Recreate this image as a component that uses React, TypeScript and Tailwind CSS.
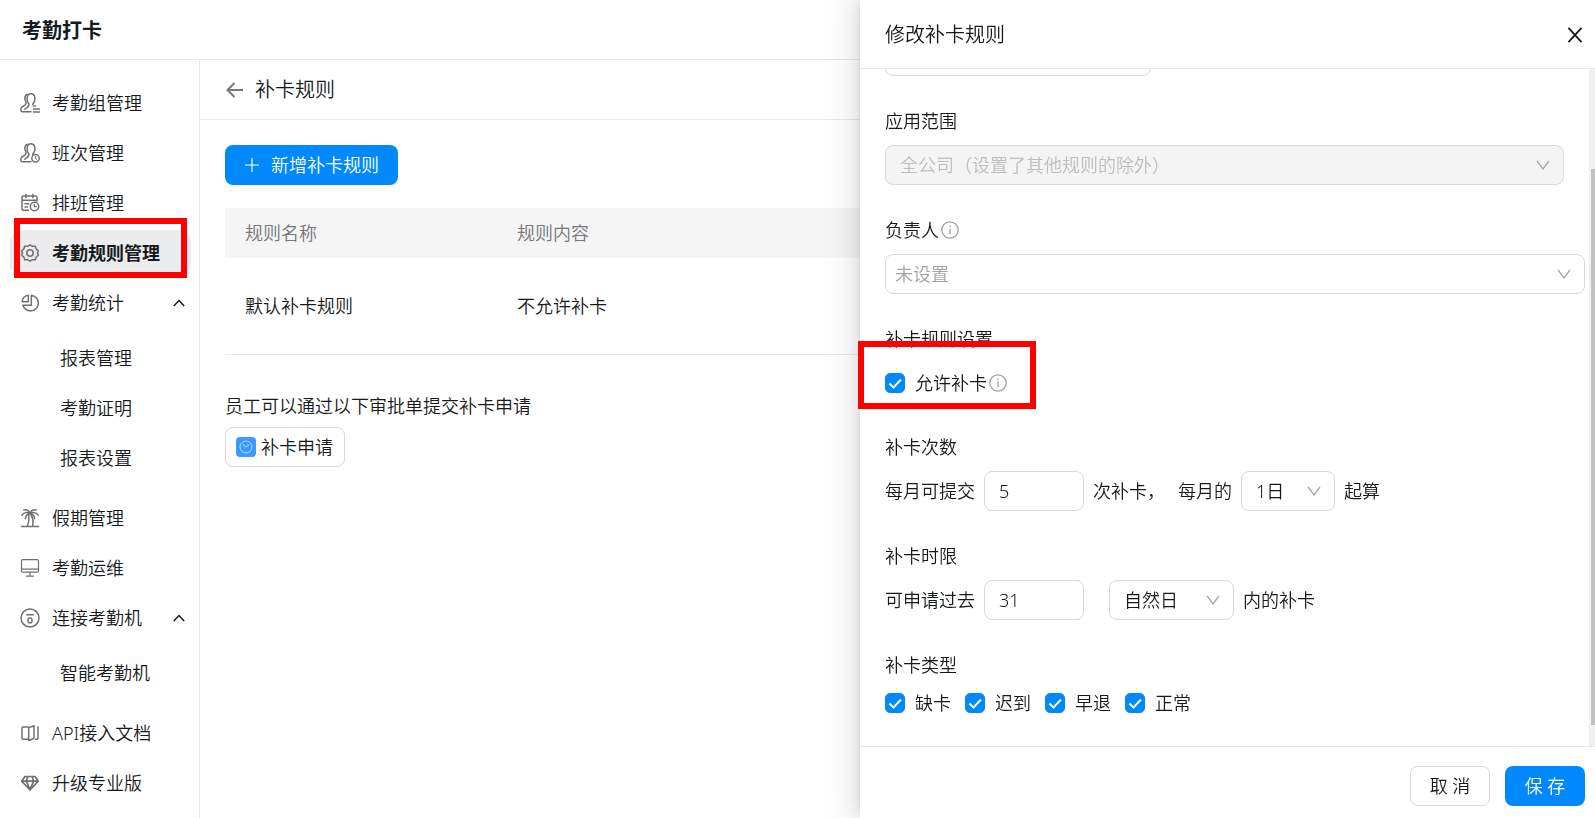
import { useState } from "react";
import type { ReactNode } from "react";
import clsx from "clsx";

function Icon({ children, className }: { children: ReactNode; className?: string }) {
    return (
        <svg
            viewBox="0 0 20 20"
            aria-hidden="true"
            className={clsx("size-5 shrink-0 fill-none stroke-[#6f7072]", className ?? "stroke-[1.5]")}
            strokeLinecap="round"
            strokeLinejoin="round"
        >
            {children}
        </svg>
    );
}

const person = (
    <>
        <path d="M7.2 1.2C4.6 2.4 4.3 5.4 5.5 7.8c.8 1.5.7 2.9-.3 4L1.8 14.2c-1.5 1-1.3 4.6.6 4.6H11" />
        <path d="M8.6 10.6C6.3 8 6.2.8 10.8.8c4.4 0 4.6 4.5 3.7 7.4-.5 1.5-1.700 2-1.800 3.600" />
        <path d="M8.6 10.6c.7 1.8-.1 3-1.5 3.9l-2.3 1.6" />
    </>
);

const icons = {
    group: (
        <Icon>
            {person}
            <path d="M13.5 13h2M13.5 16h6M13.5 18.900h6" />
        </Icon>
    ),
    shift: (
        <Icon>
            {person}
            <circle cx="15.5" cy="15.3" r="3.7" />
            <path d="M15.3 13.5v2l1.2.8" strokeWidth="1" />
        </Icon>
    ),
    schedule: (
        <Icon>
            <path d="M8.5 17.2H3.2a1.2 1.2 0 0 1-1.2-1.2V4.3a1.2 1.2 0 0 1 1.2-1.2h12.6A1.2 1.2 0 0 1 17 4.3V8M2 7.2h15M6 1.3v3.5M13 1.3v3.5M5 10.8h3.500M5 14h2.500" />
            <circle cx="14.5" cy="13.5" r="4.2" />
            <path d="M14.3 11.3v2.4h2" strokeWidth="1.2" />
        </Icon>
    ),
    rule: (
        <Icon>
            <path d="M10 1.8 12.4 3.3l2.9-.1.8 2.7L18.3 7.8 17.5 10l.8 2.2-2.2 1.9-.8 2.7-2.9-.1L10 18.2l-2.4-1.5-2.9.1-.8-2.7-2.2-1.9.8-2.2-.8-2.2 2.200-1.900.8-2.700 2.900.1z" />
            <circle cx="10" cy="10" r="3.2" />
        </Icon>
    ),
    stats: (
        <Icon>
            <path d="M8.3 2.2v6.5H2.2a6.600 6.600 0 0 1 6.100-6.500z" />
            <path d="M11.3 2.2a7.900 7.900 0 1 1-8.500 10h8.500z" />
        </Icon>
    ),
    holiday: (
        <Icon>
            <path d="M1.5 18.5h17M7.300 18.200c1.500-3.500 1.900-7 1.500-11.500M12.500 18.200c1-4 .8-8-1.700-11.700" />
            <path d="M10 5.500C8 3.800 3.500 4.300 1.800 7.200M10 5.500c-2.500.6-4.500 2.500-4.600 5.300M10 5.500c2-1.700 6.500-1.200 8.200 1.700M10 5.500c2.500.6 4.500 2.500 4.600 5.300M10 5.500C9 3 6.500 1.400 3.800 2M10 5.500c1-2.500 3.500-4.100 6.200-3.500" />
        </Icon>
    ),
    monitor: (
        <Icon className="stroke-[1.2]">
            <rect x="1.5" y="1.7" width="17" height="12.5" rx="1.2" />
            <path d="M1.5 11.200h17M10 14.200v3.600M6.500 18.200h7" />
        </Icon>
    ),
    machine: (
        <Icon>
            <circle cx="10" cy="10" r="9" />
            <path d="M6.800 6.800h6.400" />
            <rect x="8" y="10" width="4" height="4.8" rx="1.8" />
        </Icon>
    ),
    docs: (
        <Icon>
            <path d="M8.500 16.300H3.200a1.200 1.200 0 0 1-1.200-1.200V5.200A1.200 1.200 0 0 1 3.200 4h5.300M15.500 16.300h1.300a1.200 1.200 0 0 0 1.200-1.200V4" />
            <path d="M8.700 5.800a1.500 1.500 0 0 1 1-1.400l4.300-1.600v11.500a1.500 1.500 0 0 1-1 1.400l-4.300 1.800z" />
        </Icon>
    ),
    diamond: (
        <Icon className="stroke-[1.7]">
            <path d="M5 3.500h10l3.300 4.700L10 17 1.700 8.200zM1.700 8.200h16.600M6.300 8.200 10 16.500l3.700-8.300L12.200 3.700M6.300 8.200l1.500-4.500" />
        </Icon>
    ),
};

function ChevronUp() {
    return (
        <svg viewBox="0 0 12 8" aria-hidden="true" className="h-2 w-3 shrink-0 fill-none stroke-[#171a1d] stroke-[1.5]">
            <path d="M.8 7 6 1.500 11.200 7" />
        </svg>
    );
}

function InfoIcon() {
    return (
        <svg viewBox="0 0 18 18" aria-hidden="true" className="size-[18px] shrink-0 fill-none stroke-[#a2a3a5] stroke-[1.3]">
            <circle cx="9" cy="9" r="8.2" />
            <path d="M9 4.600v1.500M9 7.500v5.800" />
        </svg>
    );
}

type NavItem = { label: string; icon: ReactNode; active?: boolean; children?: string[] };

const nav: NavItem[] = [
    { label: "考勤组管理", icon: icons.group },
    { label: "班次管理", icon: icons.shift },
    { label: "排班管理", icon: icons.schedule },
    { label: "考勤规则管理", icon: icons.rule, active: true },
    { label: "考勤统计", icon: icons.stats, children: ["报表管理", "考勤证明", "报表设置"] },
    { label: "假期管理", icon: icons.holiday },
    { label: "考勤运维", icon: icons.monitor },
    { label: "连接考勤机", icon: icons.machine, children: ["智能考勤机"] },
    { label: "API接入文档", icon: icons.docs },
    { label: "升级专业版", icon: icons.diamond },
];

function Sidebar() {
    return (
        <nav className="w-[200px] shrink-0 border-r border-[#e8e9ea] pt-5 pr-2 pl-[10px]">
            <ul className="space-y-[5px]">
                {nav.map((item) => (
                    <li key={item.label} className={clsx("relative", item.children && "mb-[15px]")}>
                        <a
                            href="#"
                            className={clsx(
                                "flex h-[45px] items-center gap-3 rounded-xl pr-[6px] pl-[10px]",
                                item.active && "bg-[#ebecee] font-bold"
                            )}
                        >
                            {item.icon}
                            <span className="flex-1 whitespace-nowrap">{item.label}</span>
                            {item.children && <ChevronUp />}
                        </a>
                        {item.active && (
                            <div className="pointer-events-none absolute -top-3 left-1 h-[60px] w-[173px] border-6 border-[#ff0000]" />
                        )}
                        {item.children && (
                            <ul className="mt-[10px] space-y-[5px]">
                                {item.children.map((child) => (
                                    <li key={child}>
                                        <a href="#" className="flex h-[45px] items-center pl-[50px]">{child}</a>
                                    </li>
                                ))}
                            </ul>
                        )}
                    </li>
                ))}
            </ul>
        </nav>
    );
}

function Content() {
    return (
        <main className="min-w-0 flex-1">
            <div className="flex h-[60px] items-center gap-[11px] border-b border-[#e8e9ea] px-[26px]">
                <button type="button" aria-label="返回">
                    <svg viewBox="0 0 18 16" className="h-4 w-[18px] fill-none stroke-[#747678] stroke-2">
                        <path d="M17 8H2M8.500 1 1.500 8l7 7" />
                    </svg>
                </button>
                <h2 className="text-xl">补卡规则</h2>
            </div>
            <div className="p-[25px]">
                <button
                    type="button"
                    className="flex h-10 items-center gap-[11px] rounded-lg bg-[#0089ff] px-[19px] text-white"
                >
                    <svg viewBox="0 0 16 16" aria-hidden="true" className="size-4 fill-none stroke-white stroke-[1.2]">
                        <path d="M8 1v14M1 8h14" />
                    </svg>
                    新增补卡规则
                </button>

                <table className="mt-[23px] w-full table-fixed text-left">
                    <thead>
                        <tr className="h-[50px] bg-[#f5f5f5] text-[#747677]">
                            <th className="w-[272px] pl-5 font-[350]">规则名称</th>
                            <th className="pl-5 font-[350]">规则内容</th>
                        </tr>
                    </thead>
                    <tbody>
                        <tr className="h-24 border-b border-[#e8e9ea]">
                            <td className="pl-5">默认补卡规则</td>
                            <td className="pl-5">不允许补卡</td>
                        </tr>
                    </tbody>
                </table>

                <p className="mt-[37px]">员工可以通过以下审批单提交补卡申请</p>
                <button
                    type="button"
                    className="mt-[7px] flex h-10 w-[120px] items-center gap-[5px] rounded-lg border border-[#d8d9da] px-[10px] whitespace-nowrap"
                >
                    <span className="flex size-5 shrink-0 items-center justify-center rounded-sm bg-[#3b9aff]">
                        <svg viewBox="0 0 14 14" aria-hidden="true" className="size-[14px] fill-none stroke-[#b9dcff]">
                            <circle cx="7" cy="7" r="6" />
                            <path d="M4 4.500 6.800 7 10.500 4.500" />
                        </svg>
                    </span>
                    补卡申请
                </button>
            </div>
        </main>
    );
}

function Checkbox({ label }: { label: string }) {
    const [checked, setChecked] = useState(true);

    return (
        <label className="flex items-center gap-[10px]">
            <span className="grid size-5">
                <input
                    type="checkbox"
                    checked={checked}
                    onChange={(e) => setChecked(e.target.checked)}
                    className="col-start-1 row-start-1 size-5 appearance-none rounded-[5px] border border-[#d8d9da] checked:border-[#0089ff] checked:bg-[#0089ff]"
                />
                <svg
                    viewBox="0 0 20 20"
                    aria-hidden="true"
                    className="pointer-events-none col-start-1 row-start-1 size-5 fill-none stroke-white stroke-2"
                >
                    <path d="M4.500 10.500 8.500 14.500 16 6.500" />
                </svg>
            </span>
            {label}
        </label>
    );
}

type SelectProps = {
    label: string;
    options: string[];
    className?: string;
    fieldClassName?: string;
    disabled?: boolean;
};

function Select({ label, options, className, fieldClassName, disabled }: SelectProps) {
    return (
        <div className={clsx("grid items-center", className)}>
            <select
                aria-label={label}
                disabled={disabled}
                className={clsx(
                    "col-start-1 row-start-1 h-10 w-full appearance-none rounded-lg border border-[#d8d9da] opacity-100",
                    fieldClassName
                )}
            >
                {options.map((option) => (
                    <option key={option}>{option}</option>
                ))}
            </select>
            <svg
                viewBox="0 0 14 10"
                aria-hidden="true"
                className="pointer-events-none col-start-1 row-start-1 mr-[14px] h-[10px] w-[14px] justify-self-end fill-none stroke-[#a2a3a5] stroke-[1.3]"
            >
                <path d="M1 .8 7 9 13 .8" />
            </svg>
        </div>
    );
}

function Field({ title, info, children }: { title: string; info?: boolean; children: ReactNode }) {
    return (
        <section className="mt-[31px]">
            <h3 className="mb-[10px] flex h-7 items-center gap-[2px]">
                {title}
                {info && <InfoIcon />}
            </h3>
            {children}
        </section>
    );
}

const inputStyle = "h-10 rounded-lg border border-[#d8d9da] px-[14px]";

function Drawer() {
    return (
        <aside className="fixed inset-y-0 right-0 flex w-[735px] max-w-full flex-col bg-white shadow-[-6px_0_16px_rgba(0,0,0,0.08),-3px_0_6px_-4px_rgba(0,0,0,0.12),-9px_0_28px_8px_rgba(0,0,0,0.05)]">
            <header className="flex h-[69px] shrink-0 items-center justify-between border-b border-[#e8e9ea] pt-0.5 pr-3 pl-[25px]">
                <h2 className="text-xl">修改补卡规则</h2>
                <button type="button" aria-label="关闭">
                    <svg viewBox="0 0 16 16" className="size-4 fill-none stroke-[#171a1d] stroke-[1.8]">
                        <path d="M1.500.8 14.500 15.200M14.500.8 1.500 15.200" />
                    </svg>
                </button>
            </header>

            <div className="flex min-h-0 flex-1">
                <div className="min-w-0 flex-1 overflow-y-clip pr-1 pl-[25px]">
                    {/* scrolled down, only the bottom edge of the name field shows */}
                    <input aria-label="规则名称" className={clsx(inputStyle, "-mt-[33px] block w-[266px]")} />

                    <Field title="应用范围">
                        <Select
                            label="应用范围"
                            options={["全公司（设置了其他规则的除外）"]}
                            disabled
                            className="mr-[21px]"
                            fieldClassName="bg-[#f4f4f4] pl-[14px] text-[#bcbdbe]"
                        />
                    </Field>

                    <Field title="负责人" info>
                        <Select label="负责人" options={["未设置"]} fieldClassName="pl-[9px] text-[#a2a3a5]" />
                    </Field>

                    <Field title="补卡规则设置">
                        <div className="relative flex h-[39px] items-center gap-[2px]">
                            <Checkbox label="允许补卡" />
                            <InfoIcon />
                            <div className="pointer-events-none absolute -top-[22px] -left-[27px] h-[68px] w-[178px] border-6 border-[#ff0000]" />
                        </div>
                    </Field>

                    <Field title="补卡次数">
                        <div className="flex items-center gap-[9px]">
                            <span>每月可提交</span>
                            <input aria-label="次数" defaultValue="5" className={clsx(inputStyle, "w-[100px]")} />
                            <span>次补卡，</span>
                            <span className="ml-1">每月的</span>
                            <Select label="起算日" options={["1日"]} className="w-[94px]" fieldClassName="pl-[14px]" />
                            <span>起算</span>
                        </div>
                    </Field>

                    <Field title="补卡时限">
                        <div className="flex items-center gap-[9px]">
                            <span>可申请过去</span>
                            <input aria-label="天数" defaultValue="31" className={clsx(inputStyle, "w-[100px]")} />
                            <Select label="日期类型" options={["自然日"]} className="ml-4 w-[125px]" fieldClassName="pl-[14px]" />
                            <span>内的补卡</span>
                        </div>
                    </Field>

                    <Field title="补卡类型">
                        <div className="flex h-7 items-center gap-[14px]">
                            <Checkbox label="缺卡" />
                            <Checkbox label="迟到" />
                            <Checkbox label="早退" />
                            <Checkbox label="正常" />
                        </div>
                    </Field>
                </div>
                <div className="flex w-[6px] shrink-0 justify-end bg-[#f0f0f0] pt-[100px] pb-[21px]">
                    <div className="w-1 bg-[#c1c1c1]" />
                </div>
            </div>

            <footer className="flex h-[72px] shrink-0 items-center justify-end gap-[15px] border-t border-[#e8e9ea] pt-1.5 pr-[10px]">
                <button type="button" className="h-10 w-20 rounded-lg border border-[#d8d9da]">取 消</button>
                <button type="button" className="h-10 w-20 rounded-lg bg-[#0089ff] text-white">保 存</button>
            </footer>
        </aside>
    );
}

export default function App() {
    return (
        <div className="flex h-screen flex-col overflow-hidden bg-white font-['Noto_Sans','Noto_Sans_CJK_SC',sans-serif] text-lg font-[350] text-[#171a1d]">
            <header className="flex h-[60px] shrink-0 items-center border-b border-[#e8e9ea] px-[22px] pt-0.5">
                <h1 className="text-xl font-bold">考勤打卡</h1>
            </header>
            <div className="flex min-h-0 flex-1">
                <Sidebar />
                <Content />
            </div>
            <Drawer />
        </div>
    );
}
